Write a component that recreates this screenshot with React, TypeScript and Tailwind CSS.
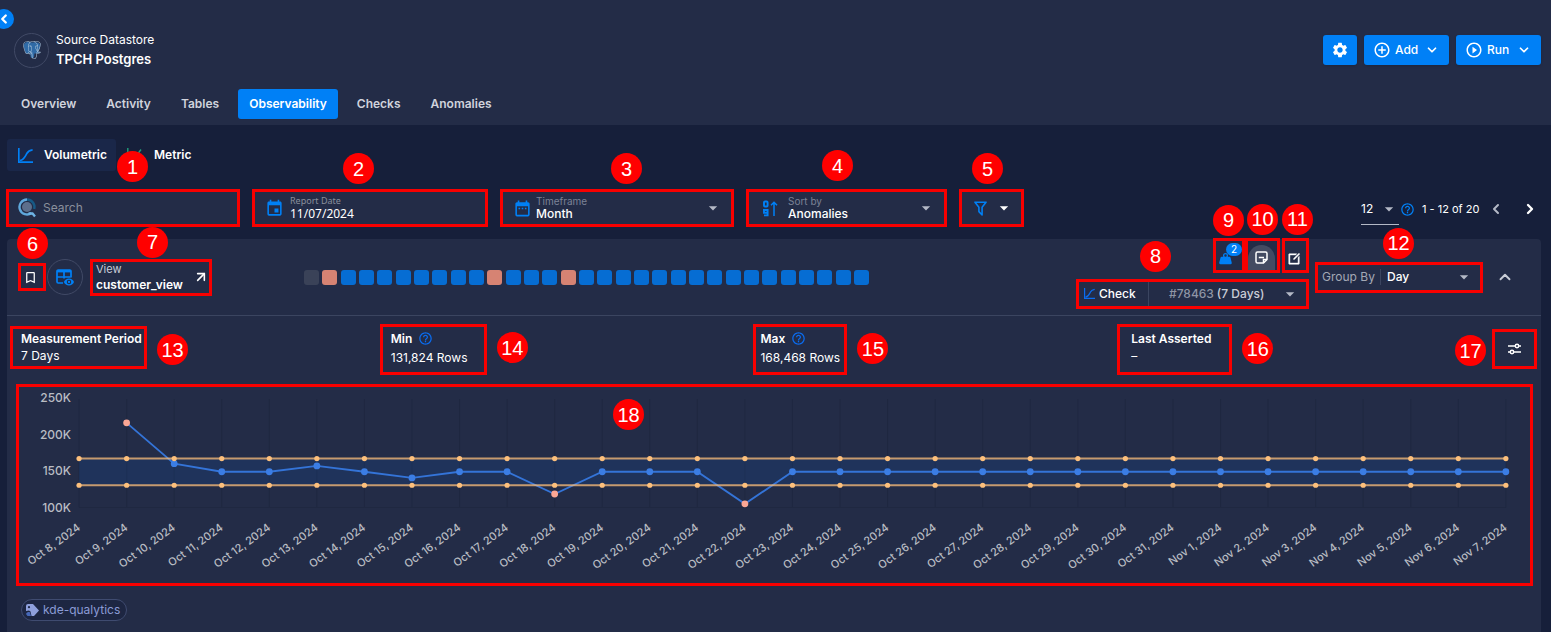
import { useId, type ReactNode, type SelectHTMLAttributes } from "react";
import { ChevronDown, ChevronLeft, ChevronRight, ChevronUp } from "lucide-react";
import {
  MdAddCircleOutline,
  MdArrowDropDown,
  MdBookmarkBorder,
  MdDateRange,
  MdEvent,
  MdHelpOutline,
  MdPlayCircleOutline,
  MdSettings,
} from "react-icons/md";
import { SiPostgresql } from "react-icons/si";
import { RiEditBoxLine } from "react-icons/ri";
import { FiArrowUpRight } from "react-icons/fi";

const BLUE = "#0080f6";

function Marker({ n, className }: { n: number; className: string }) {
  return (
    <span
      className={`pointer-events-none absolute z-10 flex size-[31px] items-center justify-center rounded-full bg-[#ff0000] font-['Liberation_Sans',Arial,sans-serif] text-xl leading-none text-white ${className}`}
    >
      {n}
    </span>
  );
}

function Boxed({
  n,
  marker,
  className = "",
  children,
}: {
  n: number;
  marker: string;
  className?: string;
  children: ReactNode;
}) {
  return (
    <div className={`relative border-[3px] border-[#f80000] ${className}`}>
      {children}
      <Marker n={n} className={marker} />
    </div>
  );
}

function PostgresIcon() {
  return (
    <svg width="18" height="18" viewBox="0 0 24 24" aria-hidden="true">
      <path
        d="M7 1.500C3 1.300.8 3.500 1.200 7c.3 3 1.500 7.500 3.300 9.300 1 .9 2.300.5 3.200-.3l1.800-.3.700 5.300c.4 1.800 2.300 2 3.600 1.200 1.300-.8 1.200-3 1.400-5.700l3 .2c1.800-.2 3.500-.8 4.300-1.900l-2.200-.8c1.500-2.500 2.700-6 2.500-8.500-.3-2.500-2.800-4-6-4-1.500 0-2.500.2-3.500.6C11 1.700 9 1.500 7 1.500z"
        fill="#2f6aa6"
      />
      <SiPostgresql size={24} color="#a9c3da" />
    </svg>
  );
}

function CurveIcon({ className = "", size = 15 }: { className?: string; size?: number }) {
  return (
    <svg width={size} height={size} viewBox="0 0 15 15" fill="none" stroke="currentColor" strokeWidth="1.700" className={className} aria-hidden="true">
      <path d="M.8 0v14.2H15" />
      <path d="M2 12.500C6 12 7.500 8 8.800 5.500S12 2 14.600 1.800" />
    </svg>
  );
}

function MetricIcon() {
  return (
    <svg width="15" height="15" viewBox="0 0 15 15" fill="none" stroke="#1f9d7a" strokeWidth="1.4" aria-hidden="true">
      <path d="M.8 0v14.2H15" />
      <path d="M2.5 9l3-3 3 3L14 1.5" />
    </svg>
  );
}

function SearchGlyph() {
  return (
    <svg width="19" height="20" viewBox="0 0 19 20" fill="none" aria-hidden="true">
      <circle cx="9" cy="9" r="5" fill="#5d6f8c" />
      <path d="M9 1.5a7.5 7.5 0 0 1 7.2 9.5" stroke="#175a86" strokeWidth="2.4" />
      <path d="M9 1.5a7.5 7.5 0 1 0 4.5 13.5" stroke="#5fa8dc" strokeWidth="2.4" />
      <path d="M10.5 15.500h4l2.500 3" stroke="#6db3e4" strokeWidth="2.4" />
    </svg>
  );
}

function SortNumericIcon() {
  return (
    <svg width="15" height="17" viewBox="0 0 15 17" fill="none" stroke={BLUE} strokeWidth="1.900" aria-hidden="true">
      <rect x="1" y="1.5" width="3.6" height="5" rx="1" />
      <path d="M1 15.4h3.6V10H1v2.8h3.6" />
      <path d="M11 16V2.500M8 5.200l3-3 3 3" strokeWidth="1.500" />
    </svg>
  );
}

function FilterIcon() {
  return (
    <svg width="19" height="19" viewBox="0 0 24 24" fill={BLUE} aria-hidden="true">
      <path d="M15 19.88c.04.3-.06.62-.28.83-.4.39-1.03.39-1.42 0L9.29 16.7a.99.99 0 0 1-.29-.83v-5.12L4.21 4.62a1 1 0 0 1 .17-1.4c.19-.14.4-.22.62-.22h14c.22 0 .43.08.62.22a1 1 0 0 1 .17 1.4L15 10.75v9.13M7.04 5 11 10.06v5.52l2 2v-7.53L16.96 5H7.04z" />
    </svg>
  );
}

function TableEyeIcon() {
  return (
    <svg width="18" height="17" viewBox="0 0 18 17" fill="none" stroke={BLUE} aria-hidden="true">
      <path d="M7 14H2.200A1.200 1.200 0 0 1 1 12.800V2.200A1.200 1.200 0 0 1 2.200 1h11.600A1.200 1.200 0 0 1 15 2.200V8.500" strokeWidth="1.700" />
      <path d="M1 2.200h14" strokeWidth="2.400" />
      <path d="M1 8h13.500M8 3v6.500" strokeWidth="1.700" />
      <path d="M7.800 13c1-2.200 3-3.400 5.200-3.400s4.200 1.200 5 3.400c-.8 2.200-2.800 3.400-5 3.400S8.800 15.200 7.800 13z" fill={BLUE} stroke="none" />
      <circle cx="13" cy="13" r="1.700" stroke="#232c47" strokeWidth="1.100" />
    </svg>
  );
}

function WeightIcon() {
  return (
    <svg width="15" height="15" viewBox="0 0 24 24" fill={BLUE} aria-hidden="true">
      <path d="M12 3a4 4 0 0 1 4 4c0 .73-.19 1.41-.54 2H18c.95 0 1.75.67 1.95 1.56C21.96 18.57 22 18.78 22 19a2 2 0 0 1-2 2H4a2 2 0 0 1-2-2c0-.22.04-.43 2.05-8.44C4.25 9.67 5.05 9 6 9h2.54A3.89 3.89 0 0 1 8 7a4 4 0 0 1 4-4m0 2a2 2 0 0 0-2 2 2 2 0 0 0 4 0 2 2 0 0 0-2-2" />
    </svg>
  );
}

function NoteIcon() {
  return (
    <svg width="13" height="13" viewBox="0 0 13 13" fill="none" stroke="white" strokeWidth="1.5" aria-hidden="true">
      <path d="M8.500 12H2.500A1.500 1.500 0 0 1 1 10.500v-8A1.500 1.500 0 0 1 2.500 1h8A1.500 1.500 0 0 1 12 2.500v6z" />
      <path d="M8.500 12V8.500H12M3.800 6.500h5.200" />
    </svg>
  );
}

function SlidersIcon() {
  return (
    <svg width="13" height="12" viewBox="0 0 13 12" fill="none" stroke="white" strokeWidth="1.500" aria-hidden="true">
      <path d="M0 3h7M11 3h2M0 9h2M6 9h7" />
      <circle cx="9" cy="3" r="1.700" />
      <circle cx="4" cy="9" r="1.700" />
    </svg>
  );
}

function Select({
  wrap = "",
  options,
  className = "",
  ...rest
}: SelectHTMLAttributes<HTMLSelectElement> & { wrap?: string; options: string[] }) {
  return (
    <span className={`flex items-center ${wrap}`}>
      <select {...rest} className={`min-w-0 flex-1 appearance-none bg-transparent outline-none ${className}`}>
        {options.map((o) => (
          <option key={o} className="bg-[#232c47]">
            {o}
          </option>
        ))}
      </select>
      <MdArrowDropDown className="pointer-events-none -ml-5 size-5 shrink-0 text-[#b4b9c6]" aria-hidden="true" />
    </span>
  );
}

function SelectField({ label, options, icon }: { label: string; options: string[]; icon: ReactNode }) {
  const id = useId();
  return (
    <div className="flex h-8 items-center gap-2 pr-2 pl-2.5">
      {icon}
      <div className="flex min-w-0 flex-1 items-center">
        <div className="min-w-0 flex-1">
          <label htmlFor={id} className="block text-[10px] leading-3 text-[#7c8296]">
            {label}
          </label>
          <select id={id} className="block w-full appearance-none bg-transparent text-xs leading-[14px] font-medium text-white outline-none">
            {options.map((o) => (
              <option key={o} className="bg-[#232c47]">
                {o}
              </option>
            ))}
          </select>
        </div>
        <MdArrowDropDown className="size-5 shrink-0 text-[#b4b9c6]" aria-hidden="true" />
      </div>
    </div>
  );
}

const tabs = ["Overview", "Activity", "Tables", "Observability", "Checks", "Anomalies"];

function Header() {
  return (
    <header className="relative bg-[#232c47] pt-[31px] pr-2.5 pb-1.5 pl-[7px]">
      <button type="button" aria-label="Collapse sidebar" className="absolute top-[9px] -left-1.5 flex size-5 items-center justify-center rounded-full bg-[#0080f6] text-white">
        <ChevronLeft className="size-3.5" strokeWidth={4} />
      </button>
      <div className="flex items-center justify-between">
        <div className="flex items-center gap-[7px] pl-[7px]">
          <span className="flex size-[35px] items-center justify-center rounded-full border border-[#414a66]">
            <PostgresIcon />
          </span>
          <div>
            <p className="text-xs leading-[18px] text-white">Source Datastore</p>
            <h1 className="text-[13px] leading-5 font-semibold text-white">TPCH Postgres</h1>
          </div>
        </div>
        <div className="flex gap-[7px] text-xs font-medium text-white">
          <button type="button" aria-label="Settings" className="flex h-[30px] w-[34px] items-center justify-center rounded-[3px] bg-[#0080f6] shadow">
            <MdSettings className="size-[18px]" />
          </button>
          <button type="button" className="flex h-[30px] w-[85px] items-center rounded-[3px] bg-[#0080f6] pl-[9px] shadow">
            <MdAddCircleOutline className="size-[18px]" />
            <span className="w-7 pl-1 text-left">Add</span>
            <ChevronDown className="ml-1.5 size-3.5" strokeWidth={3} />
          </button>
          <button type="button" className="flex h-[30px] w-[85px] items-center rounded-[3px] bg-[#0080f6] pl-[9px] shadow">
            <MdPlayCircleOutline className="size-[18px]" />
            <span className="w-7 pl-1 text-left">Run</span>
            <ChevronDown className="ml-1.5 size-3.5" strokeWidth={3} />
          </button>
        </div>
      </div>
      <nav className="mt-5 flex gap-2 pl-[3px]">
        {tabs.map((t) => (
          <a
            key={t}
            href="#"
            className={
              t === "Observability"
                ? "flex h-[30px] items-center rounded-[3px] bg-[#0080f6] px-[11px] text-xs font-semibold text-white"
                : "flex h-[30px] items-center px-[11px] text-xs font-semibold text-[#d0d3dc]"
            }
          >
            {t}
          </a>
        ))}
      </nav>
    </header>
  );
}

function Filters() {
  return (
    <div className="mt-[18px] -ml-px flex items-start justify-between">
      <div className="flex gap-3">
        <Boxed n={1} marker="-top-[41px] left-[108px]" className="w-[234px] bg-[#232c47]">
          <div className="flex h-8 items-center gap-1.5 pl-[9px]">
            <SearchGlyph />
            <input aria-label="Search" placeholder="Search" className="min-w-0 flex-1 bg-transparent text-xs text-white outline-none placeholder:text-[#8a8f9c]" />
          </div>
        </Boxed>
        <Boxed n={2} marker="-top-[39px] left-[88px]" className="w-[236px] bg-[#232c47]">
          <div className="flex h-8 items-center gap-1.5 pl-2.5 font-['Noto_Sans',sans-serif]">
            <MdEvent className="size-[19px] text-[#0080f6]" />
            <div>
              <label htmlFor="report-date" className="block text-[9px] leading-3 text-[#8a8f9c]">
                Report Date
              </label>
              <input id="report-date" defaultValue="11/07/2024" className="block w-40 bg-transparent text-xs leading-[14px] text-white outline-none" />
            </div>
          </div>
        </Boxed>
        <Boxed n={3} marker="-top-[39px] left-[108px]" className="w-[234px] bg-[#232c47]">
          <SelectField label="Timeframe" options={["Month", "Week", "Quarter"]} icon={<MdDateRange className="-mr-1 size-[19px] text-[#0080f6]" />} />
        </Boxed>
        <Boxed n={4} marker="-top-[42px] left-[73px]" className="w-[201px] bg-[#232c47]">
          <SelectField
            label="Sort by"
            options={["Anomalies", "Name"]}
            icon={
              <span className="ml-1 pr-0.5">
                <SortNumericIcon />
              </span>
            }
          />
        </Boxed>
        <Boxed n={5} marker="-top-[39px] left-[10px]" className="w-[65px] bg-[#232c47]">
          <button type="button" aria-label="Filter" className="flex h-8 w-full items-center pl-[9px]">
            <FilterIcon />
            <MdArrowDropDown className="ml-1 size-5 text-white" />
          </button>
        </Boxed>
      </div>
      <div className="mt-2 flex text-white">
        <Select aria-label="Rows per page" options={["12", "24"]} wrap="mr-px h-7 w-[38px] border-b border-[#b4b9c6] pb-1" className="text-xs" />
        <div className="flex h-6 items-center text-[11px]">
          <MdHelpOutline className="mr-[7px] size-[15px] text-[#0080f6]" />
          <span className="w-[66px] whitespace-nowrap">1 - 12 of 20</span>
          <button type="button" aria-label="Previous page">
            <ChevronLeft className="size-4 text-[#b4b9c6]" strokeWidth={3} />
          </button>
          <button type="button" aria-label="Next page" className="ml-[18px] pr-[3px]">
            <ChevronRight className="size-4" strokeWidth={3.5} />
          </button>
        </div>
      </div>
    </div>
  );
}

const anomalyDays = [1, 10, 14];

function DayStrip() {
  return (
    <div className="flex w-[565px] justify-between" role="img" aria-label="Daily status">
      {Array.from({ length: 31 }, (_, i) => (
        <span
          key={i}
          className={
            i === 0
              ? "h-[15px] w-[15px] rounded-[3px] bg-[#3a4258]"
              : anomalyDays.includes(i)
                ? "h-[15px] w-[15px] rounded-[3px] bg-[#d68373]"
                : "h-[15px] w-[15px] rounded-[3px] bg-[#066dd3]"
          }
        />
      ))}
    </div>
  );
}

function CardHeader() {
  return (
    <div className="flex h-[77px] items-center justify-between border-b border-[#3b4560] pr-[27px] pl-[11px]">
      <div className="flex items-center">
        <Boxed n={6} marker="-top-[38px] -left-1" className="size-7">
          <button type="button" aria-label="Bookmark" className="flex size-full items-center justify-center pr-1 text-white">
            <MdBookmarkBorder className="size-[15px]" />
          </button>
        </Boxed>
        <span className="ml-px flex size-9 items-center justify-center rounded-full border border-[#414a66]">
          <TableEyeIcon />
        </span>
        <Boxed n={7} marker="-top-[35px] left-11" className="ml-[7px] h-[37px] w-[122px]">
          <a href="#" className="flex h-full items-center justify-between pl-[3px] text-white">
            <span>
              <span className="block text-[11px] leading-[15px] text-[#c9cdd7]">View</span>
              <span className="block text-xs leading-4 font-semibold">customer_view</span>
            </span>
            <FiArrowUpRight className="size-4" strokeWidth={2.4} />
          </a>
        </Boxed>
        <div className="ml-[92px]">
          <DayStrip />
        </div>
      </div>
      <div className="flex items-center">
        <div className="-mt-2 flex w-[233px] flex-col gap-1.5">
          <div className="flex justify-end">
            <Boxed n={9} marker="-top-[36px] -left-[3px]" className="h-[35px] w-8">
              <button type="button" aria-label="Weight 2" className="relative size-full">
                <span className="absolute bottom-1 left-0.5">
                  <WeightIcon />
                </span>
                <span className="absolute top-0.5 right-0 flex h-[13px] w-4 items-center justify-center rounded-full bg-[#0080f6] text-[10px] leading-none text-white">2</span>
              </button>
            </Boxed>
            <Boxed n={10} marker="-top-[37px] -left-px" className="h-[35px] w-[35px]">
              <button type="button" aria-label="Notes" className="mt-1 flex h-[25px] w-[27px] items-center justify-center rounded-t-full rounded-b-xl bg-[#434b62]">
                <NoteIcon />
              </button>
            </Boxed>
            <Boxed n={11} marker="-top-[37px] -left-[3px]" className="ml-0.5 h-[35px] w-[27px]">
              <button type="button" aria-label="Edit" className="flex size-full items-center justify-center pt-2 pr-1 text-white">
                <RiEditBoxLine className="size-3.5" stroke="currentColor" strokeWidth={0.8} />
              </button>
            </Boxed>
          </div>
          <Boxed n={8} marker="-top-[41px] left-[61px]" className="h-[30px]">
            <div className="flex h-full items-center text-xs">
              <span className="flex h-full w-[70px] items-center gap-1 border-r border-[#3b4560] pl-[5px] font-medium text-white">
                <CurveIcon size={11} className="shrink-0 text-[#0a6cf0]" />
                Check
              </span>
              <label htmlFor="check-id" className="pl-5 font-medium text-[#8f95a5]">
                #78463
              </label>
              <Select id="check-id" options={["(7 Days)", "(30 Days)"]} wrap="h-full flex-1 pr-1.5" className="pl-[3px] font-medium text-[#c9cdd7]" />
            </div>
          </Boxed>
        </div>
        <Boxed n={12} marker="-top-[37px] left-[65px]" className="ml-1.5 h-[31px] w-[168px]">
          <div className="flex h-full items-center text-xs">
            <label htmlFor="group-by" className="w-[62px] pl-1 whitespace-nowrap text-[#a3a8b5]">
              Group By
            </label>
            <Select id="group-by" options={["Day", "Week", "Month"]} wrap="h-4 flex-1 border-l border-[#3b4560] pr-1.5" className="pl-1.5 font-medium text-white" />
          </div>
        </Boxed>
        <button type="button" aria-label="Collapse" className="ml-[13px]">
          <ChevronUp className="size-[18px] text-[#c9cdd7]" strokeWidth={2.5} />
        </button>
      </div>
    </div>
  );
}

function Stat({ title, value, help = false }: { title: string; value: string; help?: boolean }) {
  return (
    <dl className="text-xs whitespace-nowrap text-white">
      <dt className="flex h-[17px] items-center gap-1.5 font-semibold">
        {title}
        {help && <MdHelpOutline className="size-[15px] text-[#0a6cf0]" />}
      </dt>
      <dd className={help ? "mt-0.5 leading-[18px]" : "leading-[18px]"}>{value}</dd>
    </dl>
  );
}

function Stats() {
  return (
    <div className="grid grid-cols-[370fr_374fr_364fr_375fr_45px] items-start pt-2 pr-1 pl-[3px]">
      <Boxed n={13} marker="top-[5px] -right-11" className="mt-0.5 h-[43px] w-[137px] justify-self-start pt-px pl-2">
        <Stat title="Measurement Period" value="7 Days" />
      </Boxed>
      <Boxed n={14} marker="top-[5px] -right-11" className="h-[51px] w-[107px] justify-self-start pt-[3px] pl-2">
        <Stat title="Min" value="131,824 Rows" help />
      </Boxed>
      <Boxed n={15} marker="top-1.5 -right-11" className="h-[51px] w-[94px] justify-self-start pt-[3px] pl-1">
        <Stat title="Max" value="168,468 Rows" help />
      </Boxed>
      <Boxed n={16} marker="top-1.5 -right-11" className="h-[51px] w-[115px] justify-self-start pt-[3px] pl-[11px]">
        <Stat title="Last Asserted" value="–" />
      </Boxed>
      <Boxed n={17} marker="top-[3px] -left-10" className="mt-[5px] h-10 w-[45px]">
        <button type="button" aria-label="Chart settings" className="flex size-full items-center justify-center">
          <SlidersIcon />
        </button>
      </Boxed>
    </div>
  );
}

const START_X = 60;
const STEP = 47.53;
const xAt = (i: number) => START_X + i * STEP;
const yAt = (k: number) => 11 + (250 - k) * 0.7295;

const days = Array.from({ length: 31 }, (_, i) => (i < 24 ? `Oct ${i + 8}, 2024` : `Nov ${i - 23}, 2024`));
const rows = [216, 160, 149, 149, 157, 149, 140.5, 149, 149, 118.5, 149, 149, 149, 105, ...Array<number>(16).fill(149)];
const MAX_K = 167;
const MIN_K = 130.5;

function VolumeChart() {
  const line = rows.map((v, i) => `${i ? "L" : "M"}${xAt(i + 1)} ${yAt(v)}`).join("");
  const right = xAt(30);
  return (
    <svg viewBox="0 0 1510 196" className="block w-full" role="img" aria-label="Row volume per day" fontSize="12" fill="#b9bcc3">
      {days.map((d, i) => (
        <line key={d} x1={xAt(i)} x2={xAt(i)} y1="12" y2={yAt(100)} stroke="#1f2841" />
      ))}
      <line x1={START_X} x2={right} y1={yAt(100)} y2={yAt(100)} stroke="#1f2841" />
      <rect x={START_X} y={yAt(MAX_K)} width={right - START_X} height={yAt(MIN_K) - yAt(MAX_K)} fill="#0a6cf0" fillOpacity="0.12" />
      {[250, 200, 150, 100].map((k) => (
        <text key={k} x="52" y={yAt(k) + 4} textAnchor="end" fontWeight="500">
          {k}K
        </text>
      ))}
      <path d={line} fill="none" stroke="#3474d8" strokeWidth="1.8" />
      {rows.map((v, i) => (
        <circle key={i} cx={xAt(i + 1)} cy={yAt(v)} r="3.4" fill={anomalyDays.includes(i + 1) ? "#fba795" : "#3b7de4"} />
      ))}
      {[MAX_K, MIN_K].map((k) => (
        <g key={k}>
          <line x1={START_X} x2={right} y1={yAt(k)} y2={yAt(k)} stroke="#fdbf7a" strokeOpacity="0.75" strokeWidth="2" />
          {days.map((d, i) => (
            <circle key={d} cx={xAt(i)} cy={yAt(k)} r="2.600" fill="#fdc07c" />
          ))}
        </g>
      ))}
      {days.map((d, i) => (
        <text key={d} textAnchor="end" fontSize="11" fontWeight="500" transform={`translate(${xAt(i) + 2} 142) rotate(-36)`}>
          {d}
        </text>
      ))}
    </svg>
  );
}

export default function App() {
  return (
    <div className="min-h-screen overflow-x-hidden bg-[#161f3a] font-[Inter,sans-serif]">
      <Header />
      <main className="pt-3.5 pr-2.5 pl-[7px]">
        <div className="flex items-center gap-[11px] text-xs font-semibold text-white">
          <button type="button" className="flex h-8 w-[109px] items-center gap-[11px] rounded-[3px] bg-[#1a2749] pl-[11px]">
            <CurveIcon className="text-[#0080f6]" />
            Volumetric
          </button>
          <button type="button" className="flex h-8 items-center gap-3">
            <MetricIcon />
            Metric
          </button>
        </div>
        <Filters />
        <section className="mt-3 rounded-t-[4px] bg-[#232c47] pb-[11px]">
          <CardHeader />
          <Stats />
          <Boxed n={18} marker="top-[12px] left-[594px]" className="mt-[9px] mr-2 ml-[9px]">
            <VolumeChart />
          </Boxed>
          <a href="#" className="mt-[13px] ml-3.5 inline-flex h-[22px] items-center gap-1 rounded-full border border-[#3f4b70] bg-[#1d2642] pr-1.5 pl-1 text-xs text-[#8b9bd6]">
            <svg width="13" height="13" viewBox="0 0 13 13" aria-hidden="true">
              <path d="M0 2a2 2 0 0 1 2-2h5l6 6.500-5 5.500H5.500L4.500 7.500 3 6.500 0 7z" fill="#8fa0dc" />
              <path d="M0 10c1-2 3-2.500 4-1.500L5 12H1.500z" fill="#4668b8" />
              <circle cx="3" cy="3.200" r="1.100" fill="#1d2642" />
            </svg>
            kde-qualytics
          </a>
        </section>
      </main>
    </div>
  );
}
